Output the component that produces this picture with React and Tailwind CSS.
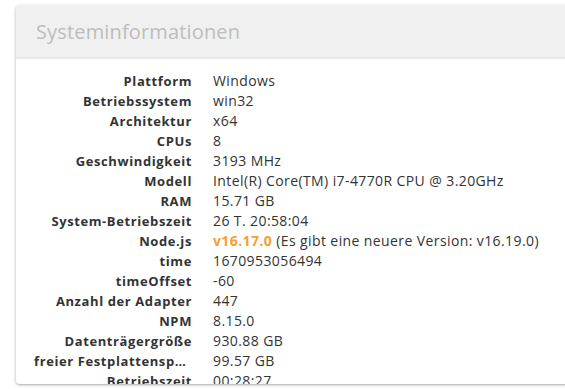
import React from 'react';

const rows = [
  { label: 'Plattform', value: 'Windows' },
  { label: 'Betriebssystem', value: 'win32' },
  { label: 'Architektur', value: 'x64' },
  { label: 'CPUs', value: '8' },
  { label: 'Geschwindigkeit', value: '3193 MHz' },
  { label: 'Modell', value: 'Intel(R) Core(TM) i7-4770R CPU @ 3.20GHz' },
  { label: 'RAM', value: '15.71 GB' },
  { label: 'System-Betriebszeit', value: '26 T. 20:58:04' },
  { label: 'Node.js', value: 'node' },
  { label: 'time', value: '1670953056494' },
  { label: 'timeOffset', value: '-60' },
  { label: 'Anzahl der Adapter', value: '447' },
  { label: 'NPM', value: '8.15.0' },
  { label: 'Datenträgergröße', value: '930.88 GB' },
  { label: 'freier Festplattenspeicher', value: '99.57 GB' },
  { label: 'Betriebszeit', value: '00:28:27' },
  { label: 'Adapter-Betriebszeit', value: '00:28:20' },
];

const NodeVersion = () => (
  <>
    <span className="font-bold text-[#f5a033]">v16.17.0</span>
    <span> (Es gibt eine neuere Version: v16.19.0)</span>
  </>
);

export default function App() {
  return (
    <div
      className="h-[389px] w-[565px] overflow-hidden bg-white pl-4 pt-[5px]"
      style={{ fontFamily: '"Open Sans", "Noto Sans", sans-serif' }}
    >
      <div className="flex h-[379px] w-[600px] flex-col overflow-hidden rounded-[4px] bg-white shadow-[0_1px_3px_rgba(0,0,0,0.35)]">
        {/* card header */}
        <div className="flex h-[54px] shrink-0 items-center border-b-2 border-[#e6e8ec] bg-[#f0f0f0] pl-5">
          <h2 className="pt-[2px] text-[20px] tracking-[0.15px] text-[#bdbdbd]">Systeminformationen</h2>
        </div>

        {/* info table */}
        <div className="flex-1 overflow-hidden pt-[12px] pl-[18px]">
          {rows.map((row) => (
            <div key={row.label} className="flex h-5 items-baseline leading-5 text-[#333]">
              <div className="w-[158px] shrink-0 truncate text-right text-[13px] font-bold tracking-[0.6px]">
                {row.label}
              </div>
              <div className="whitespace-nowrap pl-[21px] text-[14px] tracking-[0.4px]">
                {row.value === 'node' ? <NodeVersion /> : row.value}
              </div>
            </div>
          ))}
        </div>
      </div>
    </div>
  );
}
